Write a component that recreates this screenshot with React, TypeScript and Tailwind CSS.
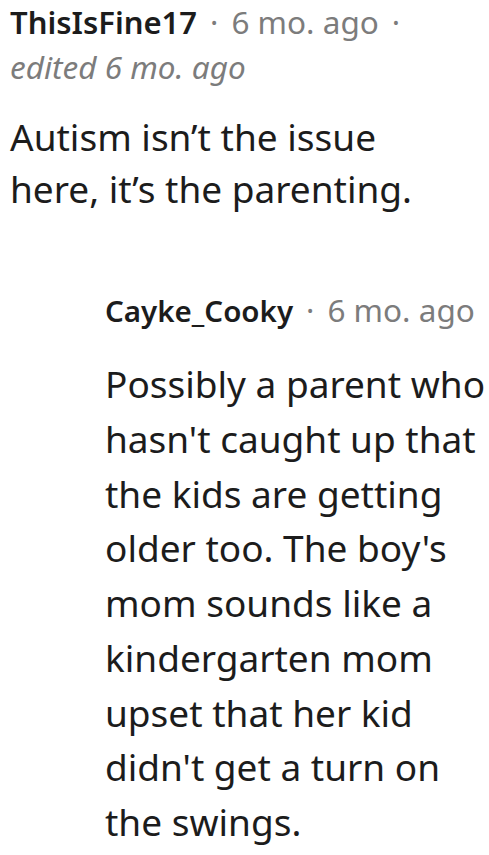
function Header({ name, extraDot, nameSize, lead }: { name: string; extraDot?: boolean; nameSize: string; lead: string }) {
  return (
    <div className={`flex items-baseline gap-[13px] text-[31px] whitespace-nowrap ${lead}`}>
      <span className={`font-semibold text-[#1c1c1c] ${nameSize}`}>{name}</span>
      <span className="text-[#7c7c7c]">·</span>
      <span className="text-[#7c7c7c] text-[31.5px]">6 mo. ago</span>
      {extraDot && <span className="text-[#7c7c7c]">·</span>}
    </div>
  );
}

export default function App() {
  return (
    <div className="w-[489px] h-[855px] bg-white overflow-hidden" style={{ fontFamily: '"Noto Sans", "Open Sans", sans-serif' }}>
      <div className="pl-[10px]">
        <Header name="ThisIsFine17" extraDot nameSize="text-[31px]" lead="leading-[43px]" />
        <div className="mt-[3px] text-[31.5px] leading-[40px] italic text-[#7c7c7c]">edited 6 mo. ago</div>
        <div className="mt-[24px] text-[37px] leading-[52px] text-[#1c1c1c]">
          Autism isn’t the issue<br />here, it’s the parenting.
        </div>
      </div>
      <div className="pl-[105px] mt-[75px]">
        <Header name="Cayke_Cooky" nameSize="text-[29.5px]" lead="leading-[40px]" />
        <div className="mt-[26px] w-[390px] text-[37px] leading-[54.75px] text-[#1c1c1c]">
          Possibly a parent who hasn't caught up that the kids are getting older too. The boy's mom sounds like a kindergarten mom upset that her kid didn't get a turn on the swings.
        </div>
      </div>
    </div>
  );
}
